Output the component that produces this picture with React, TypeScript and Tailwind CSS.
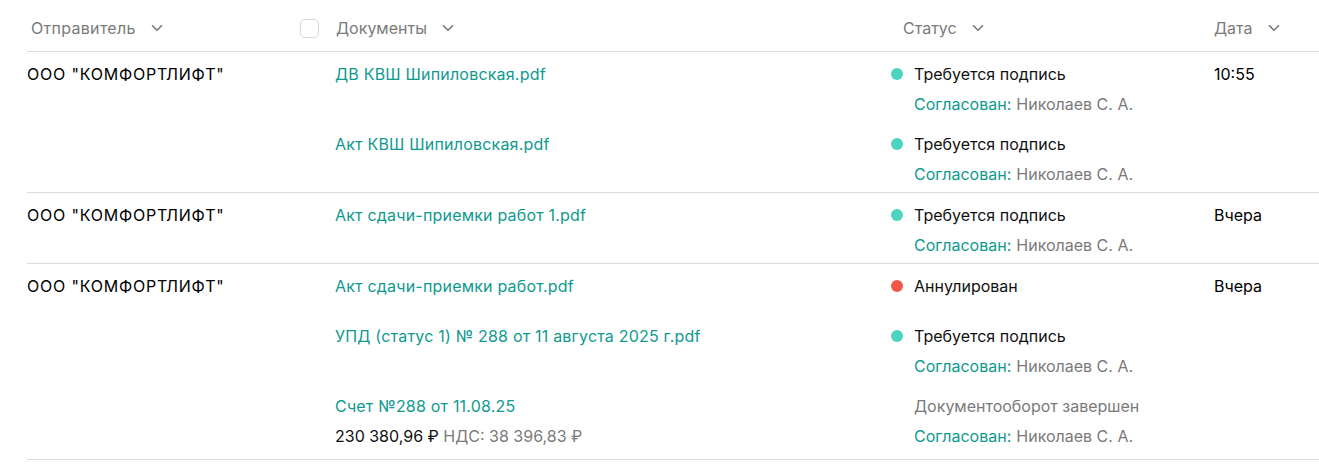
import React from "react";

type Status = { kind: "sign" | "cancel" | "done"; approved?: boolean };
type Doc = { name: string; amount?: boolean; status: Status; extraPb?: boolean };
type Row = { sender: string; date: string; docs: Doc[] };

const rows: Row[] = [
  {
    sender: 'ООО "КОМФОРТЛИФТ"',
    date: "10:55",
    docs: [
      { name: "ДВ КВШ Шипиловская.pdf", status: { kind: "sign", approved: true } },
      { name: "Акт КВШ Шипиловская.pdf", status: { kind: "sign", approved: true } },
    ],
  },
  {
    sender: 'ООО "КОМФОРТЛИФТ"',
    date: "Вчера",
    docs: [{ name: "Акт сдачи-приемки работ 1.pdf", status: { kind: "sign", approved: true } }],
  },
  {
    sender: 'ООО "КОМФОРТЛИФТ"',
    date: "Вчера",
    docs: [
      { name: "Акт сдачи-приемки работ.pdf", status: { kind: "cancel" } },
      { name: "УПД (статус 1) № 288 от 11 августа 2025 г.pdf", status: { kind: "sign", approved: true } },
      { name: "Счет №288 от 11.08.25", amount: true, status: { kind: "done", approved: true }, extraPb: true },
    ],
  },
];

function Chevron() {
  return (
    <svg width="18" height="18" viewBox="0 0 24 24" fill="none" stroke="#7a7a7a" strokeWidth="2.2" strokeLinecap="round" strokeLinejoin="round">
      <path d="M6 9l6 6 6-6" />
    </svg>
  );
}

function StatusCell({ s }: { s: Status }) {
  return (
    <div className="flex flex-col gap-[10px]">
      <div className="flex items-center h-5">
        {s.kind === "done" ? (
          <span className="pl-[23px] text-[#7a7a7a]">Документооборот завершен</span>
        ) : (
          <>
            <span className={`w-3 h-3 rounded-full mr-[11px] ${s.kind === "cancel" ? "bg-[#f2584a]" : "bg-[#4dd4be]"}`} />
            <span className="text-[#111]">{s.kind === "cancel" ? "Аннулирован" : "Требуется подпись"}</span>
          </>
        )}
      </div>
      {s.approved && (
        <div className="h-5 flex items-center pl-[23px]">
          <span className="text-[#10998f]">Согласован:</span>
          <span className="text-[#7a7a7a] ml-[5px]">Николаев С. А.</span>
        </div>
      )}
    </div>
  );
}

export default function App() {
  const grid = "grid grid-cols-[273px_35px_556px_323px_1fr]";
  return (
    <div className="w-[1319px] h-[466px] bg-white pl-[27px] text-[16px] leading-5" style={{ fontFamily: "Inter, 'Noto Sans', sans-serif" }}>
      <div className={`${grid} h-[52px] items-center border-b border-[#dcdcdc] text-[#7a7a7a]`}>
        <div className="flex items-center gap-[12px] pl-[4px] pt-[5px]">
          <span className="tracking-[0.3px]">Отправитель</span>
          <Chevron />
        </div>
        <div className="flex items-center pt-[5px]">
          <span className="w-[19px] h-[19px] rounded-[5px] border border-[#d6d6d6] bg-white" />
        </div>
        <div className="flex items-center gap-[12px] pl-[1px] pt-[5px]">
          <span>Документы</span>
          <Chevron />
        </div>
        <div className="flex items-center gap-[12px] pl-[12px] pt-[5px]">
          <span>Статус</span>
          <Chevron />
        </div>
        <div className="flex items-center gap-[12px] pt-[5px]">
          <span>Дата</span>
          <Chevron />
        </div>
      </div>
      {rows.map((r, i) => (
        <div key={i} className={`${grid} border-b border-[#dcdcdc]`}>
          <div className="pt-3 text-[#000]">
            <span className="tracking-[0.8px]">{r.sender}</span>
          </div>
          <div />
          <div className="col-span-2 flex flex-col">
            {r.docs.map((d, j) => (
              <div key={j} className={`grid grid-cols-[556px_323px] pt-3 min-h-[50px] ${d.extraPb ? "pb-[13px]" : "pb-2"}`}>
                <div className="flex flex-col gap-[10px]">
                  <span className="text-[#10998f] h-5 tracking-[0.2px]">{d.name}</span>
                  {d.amount && (
                    <span className="h-5">
                      <span className="text-[#111]">230 380,96 ₽</span>{" "}
                      <span className="text-[#7a7a7a]">НДС: 38 396,83 ₽</span>
                    </span>
                  )}
                </div>
                <StatusCell s={d.status} />
              </div>
            ))}
          </div>
          <div className="pt-3 text-[#000]">
            <span>{r.date}</span>
          </div>
        </div>
      ))}
    </div>
  );
}
